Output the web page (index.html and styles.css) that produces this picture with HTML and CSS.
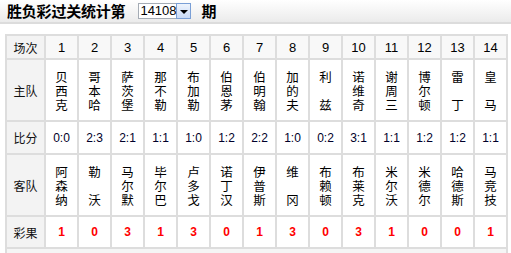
FILE: index.html
```html
<!DOCTYPE html>
<html lang="zh">
<head>
<meta charset="utf-8">
<title>胜负彩过关统计</title>
<link rel="stylesheet" href="styles.css">
</head>
<body>
<div class="topbar">
  <span class="title">胜负彩过关统计第</span>
  <span class="sel"><span class="sel-val">14108</span><span class="sel-btn"><span class="tri"></span></span></span>
  <span class="title qi">期</span>
</div>
<table class="grid">
  <colgroup><col class="c0"><col span="14" class="cn"></colgroup>
  <tr class="r-head">
    <th>场次</th><td>1</td><td>2</td><td>3</td><td>4</td><td>5</td><td>6</td><td>7</td><td>8</td><td>9</td><td>10</td><td>11</td><td>12</td><td>13</td><td>14</td>
  </tr>
  <tr class="r-team">
    <th>主队</th>
    <td>贝<br>西<br>克</td><td>哥<br>本<br>哈</td><td>萨<br>茨<br>堡</td><td>那<br>不<br>勒</td><td>布<br>加<br>勒</td><td>伯<br>恩<br>茅</td><td>伯<br>明<br>翰</td><td>加<br>的<br>夫</td><td>利<br>&nbsp;<br>兹</td><td>诺<br>维<br>奇</td><td>谢<br>周<br>三</td><td>博<br>尔<br>顿</td><td>雷<br>&nbsp;<br>丁</td><td>皇<br>&nbsp;<br>马</td>
  </tr>
  <tr class="r-score">
    <th>比分</th><td>0:0</td><td>2:3</td><td>2:1</td><td>1:1</td><td>1:0</td><td>1:2</td><td>2:2</td><td>1:0</td><td>0:2</td><td>3:1</td><td>1:1</td><td>1:2</td><td>1:2</td><td>1:1</td>
  </tr>
  <tr class="r-team r-away">
    <th>客队</th>
    <td>阿<br>森<br>纳</td><td>勒<br>&nbsp;<br>沃</td><td>马<br>尔<br>默</td><td>毕<br>尔<br>巴</td><td>卢<br>多<br>戈</td><td>诺<br>丁<br>汉</td><td>伊<br>普<br>斯</td><td>维<br>&nbsp;<br>冈</td><td>布<br>赖<br>顿</td><td>布<br>莱<br>克</td><td>米<br>尔<br>沃</td><td>米<br>德<br>尔</td><td>哈<br>德<br>斯</td><td>马<br>竞<br>技</td>
  </tr>
  <tr class="r-res">
    <th>彩果</th><td>1</td><td>0</td><td>3</td><td>1</td><td>3</td><td>0</td><td>1</td><td>3</td><td>0</td><td>3</td><td>1</td><td>0</td><td>0</td><td>1</td>
  </tr>
  <tr class="r-more">
    <td colspan="15"></td>
  </tr>
</table>
</body>
</html>
```
FILE: styles.css
```css
html, body {
  margin: 0;
  padding: 0;
  background: #fff;
}
body {
  font-family: "Liberation Sans", "Noto Sans CJK SC", sans-serif;
  color: #000;
}
.topbar {
  height: 22px;
  border-bottom: 2px solid #dcdcdc;
  background: linear-gradient(#ffffff, #ebebeb);
  display: flex;
  align-items: center;
  padding-left: 7px;
}
.title {
  font-family: "Noto Sans CJK SC", sans-serif;
  font-weight: bold;
  font-size: 15px;
  line-height: 18px;
  letter-spacing: -0.2px;
}
.qi {
  margin-left: 10px;
}
.sel {
  display: flex;
  margin-left: 13px;
  height: 16px;
  box-sizing: border-box;
  border: 1px solid #a5acb5;
  background: #fff;
}
.sel-val {
  font-size: 13px;
  line-height: 14px;
  padding-left: 1px;
  width: 36px;
}
.sel-btn {
  width: 15px;
  box-sizing: border-box;
  border: 1px solid #7a9fd6;
  background: linear-gradient(#eef4fd, #c9daf5);
  display: flex;
  align-items: center;
  justify-content: center;
  margin: -1px -1px -1px 0;
  height: 16px;
}
.tri {
  width: 0;
  height: 0;
  border-left: 4px solid transparent;
  border-right: 4px solid transparent;
  border-top: 4px solid #000;
  margin-top: 2px;
}
.grid {
  margin: 10px 0 0 5px;
  border-collapse: collapse;
  width: 501px;
  table-layout: fixed;
}
.c0 { width: 39px; }
.cn { width: 33px; }
.grid th, .grid td {
  border: 2px solid #dddddd;
  padding: 0;
  text-align: center;
  vertical-align: middle;
}
.grid th {
  font-family: "Noto Sans CJK SC", sans-serif;
  font-weight: normal;
  font-size: 12px;
  background: #f3f3f3;
  color: #111;
}
.r-head td {
  background: #f8f8f8;
  font-size: 13px;
  height: 22px;
}
.r-team td {
  font-family: "Noto Sans CJK SC", sans-serif;
  font-size: 12.5px;
  line-height: 14px;
  height: 58px;
  padding-top: 2px;
}
.r-away td {
  height: 58px;
}
.r-score td {
  font-size: 12px;
  height: 31px;
  color: #00002a;
}
.r-res td {
  font-size: 12px;
  font-weight: bold;
  color: #ff0000;
  height: 30px;
}
.r-more td {
  background: #f5f5f5;
  height: 12px;
}
```
